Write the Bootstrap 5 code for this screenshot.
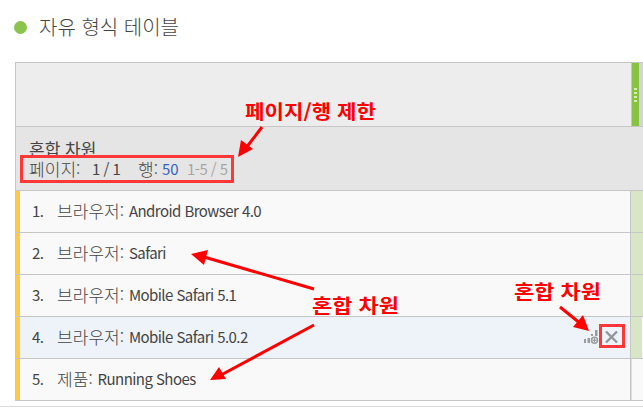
<!DOCTYPE html>
<html lang="ko">
<head>
<meta charset="utf-8">
<title>자유 형식 테이블</title>
<link href="https://cdn.jsdelivr.net/npm/bootstrap@5.3.0/dist/css/bootstrap.min.css" rel="stylesheet">
<style>
body{height:414px;overflow:hidden;background:#fff;color:#444;font-family:"Noto Sans CJK KR",sans-serif;font-size:15px;line-height:24px;letter-spacing:-.55px}
.panel-area{height:407px;border-bottom:1px solid #dcdcdc}
.panel-title{height:62px;padding:0 0 7px 14px;font-size:20px;font-weight:300;letter-spacing:0}
.title-text{margin-top:-2px}
.dot{width:13px;height:13px;background:#8bc34f;margin-right:12px}
.grid-box{margin-left:15px;border:1px solid #c6c6c6;border-right:0}
.head-top{height:64px;background:#ededed;border-bottom:1px solid #c6c6c6}
.handle{width:8px;background:#86c440;border-left:1px solid #c6c6c6;gap:2px}
.handle i{width:3px;height:2px;background:#d5edb9}
.head-edge{width:4px;background:#d4d4d4}
.head-sub{height:64px;background:#e5e5e5;border-bottom:1px solid #c6c6c6;padding:12px 0 0 13px}
.head-sub>div{height:20px;line-height:20px}
.dim-name{font-size:17px;letter-spacing:0}
.line-row{height:42px;border-bottom:1px solid #c6c6c6;background:#f9f9f9}
.line-row:last-child{border-bottom:0;height:41px}
.line-row.hot{background:#edf3f8}
.line-text{padding-bottom:1px}
.bar{width:4px;background:#ffca4b}
.num{width:37px;padding-left:12px}
.ko{font-size:17px;font-weight:300;letter-spacing:.05px}
.side{width:13px;border-left:1px solid #c6c6c6;background:#d8e6c5}
.side.edge{border-right:1px solid #f9f9f9}
.side.last{background:#f9f9f9;box-shadow:inset 1px 0 #d8e6c5}
.w-page{width:63px}.w-count{width:46px}.w-rows{width:24px}.w-size{width:25px;letter-spacing:0}
.blue{color:#3463bd}.dim{color:#a6a6a6}
.tools{margin-right:5px}
.marks{letter-spacing:0}
.marks text{font-size:19px;font-weight:700;fill:#f00}
</style>
</head>
<body>
<main class="panel-area">
<div class="panel-title d-flex align-items-center"><span class="dot rounded-circle"></span><span class="title-text">자유 형식 테이블</span></div>
<div class="grid-box">
<div class="head-top d-flex"><div class="flex-grow-1"></div><div class="handle d-flex flex-column align-items-center justify-content-center"><i></i><i></i><i></i><i></i></div><div class="head-edge"></div></div>
<div class="head-sub"><div class="dim-name">혼합 차원</div><div class="d-flex align-items-center"><span class="ko w-page">페이지:</span><span class="w-count">1 / 1</span><span class="ko w-rows">행:</span><span class="blue w-size">50</span><span class="dim">1-5 / 5</span></div></div>
<div class="line-row d-flex"><span class="bar"></span><div class="line-text d-flex align-items-center flex-grow-1"><span class="num">1.</span><span class="ko">브라우저:&nbsp;</span><span>Android Browser 4.0</span></div><span class="side"></span></div>
<div class="line-row d-flex"><span class="bar"></span><div class="line-text d-flex align-items-center flex-grow-1"><span class="num">2.</span><span class="ko">브라우저:&nbsp;</span><span>Safari</span></div><span class="side"></span></div>
<div class="line-row d-flex"><span class="bar"></span><div class="line-text d-flex align-items-center flex-grow-1"><span class="num">3.</span><span class="ko">브라우저:&nbsp;</span><span>Mobile Safari 5.1</span></div><span class="side"></span></div>
<div class="line-row hot d-flex"><span class="bar"></span><div class="line-text d-flex align-items-center flex-grow-1"><span class="num">4.</span><span class="ko">브라우저:&nbsp;</span><span>Mobile Safari 5.0.2</span>
<svg class="ms-auto tools" width="41" height="20" viewBox="0 0 41 20"><path d="M0 12h2v4H0zM3.500 11h2.500v5h-2.500zM7 7h2v2H7zM11 3h2.500v6H11z" fill="#9b9b9b"/><circle cx="10.500" cy="13.300" r="3" fill="#edf3f8" stroke="#9b9b9b" stroke-width="1.500"/><path d="M8.500 13.300h4M10.500 11.300v4" stroke="#9b9b9b" stroke-width="1.200"/><path d="M22 4.500l11 11M33 4.500l-11 11" stroke="#929699" stroke-width="2.400"/></svg></div><span class="side edge"></span></div>
<div class="line-row d-flex"><span class="bar"></span><div class="line-text d-flex align-items-center flex-grow-1"><span class="num">5.</span><span class="ko">제품:&nbsp;</span><span>Running Shoes</span></div><span class="side last"></span></div>
</div>
</main>
<svg class="marks position-absolute top-0 start-0" width="643" height="414" viewBox="0 0 643 414">
<g fill="none" stroke="#ff3737" stroke-width="3"><rect x="21.500" y="156.500" width="211" height="25"/><rect x="600.500" y="325.500" width="23" height="21"/></g>
<g stroke="#f00" stroke-width="3"><path d="M262 127L246 148M314 289L204 257M314 325L221 375M560 307L581 324"/></g>
<g fill="#f00"><path d="M238 157L241 140L253 149zM191 254L208 250L204 265zM210 380L219 367L226 379zM589 331L583 315L573 327z"/></g>
<text x="245" y="119" textLength="131" lengthAdjust="spacingAndGlyphs">페이지/행 제한</text><text x="312" y="313" textLength="87" lengthAdjust="spacingAndGlyphs">혼합 차원</text><text x="514" y="299" textLength="87" lengthAdjust="spacingAndGlyphs">혼합 차원</text>
</svg>
<script src="https://cdn.jsdelivr.net/npm/bootstrap@5.3.0/dist/js/bootstrap.bundle.min.js"></script>
</body>
</html>
